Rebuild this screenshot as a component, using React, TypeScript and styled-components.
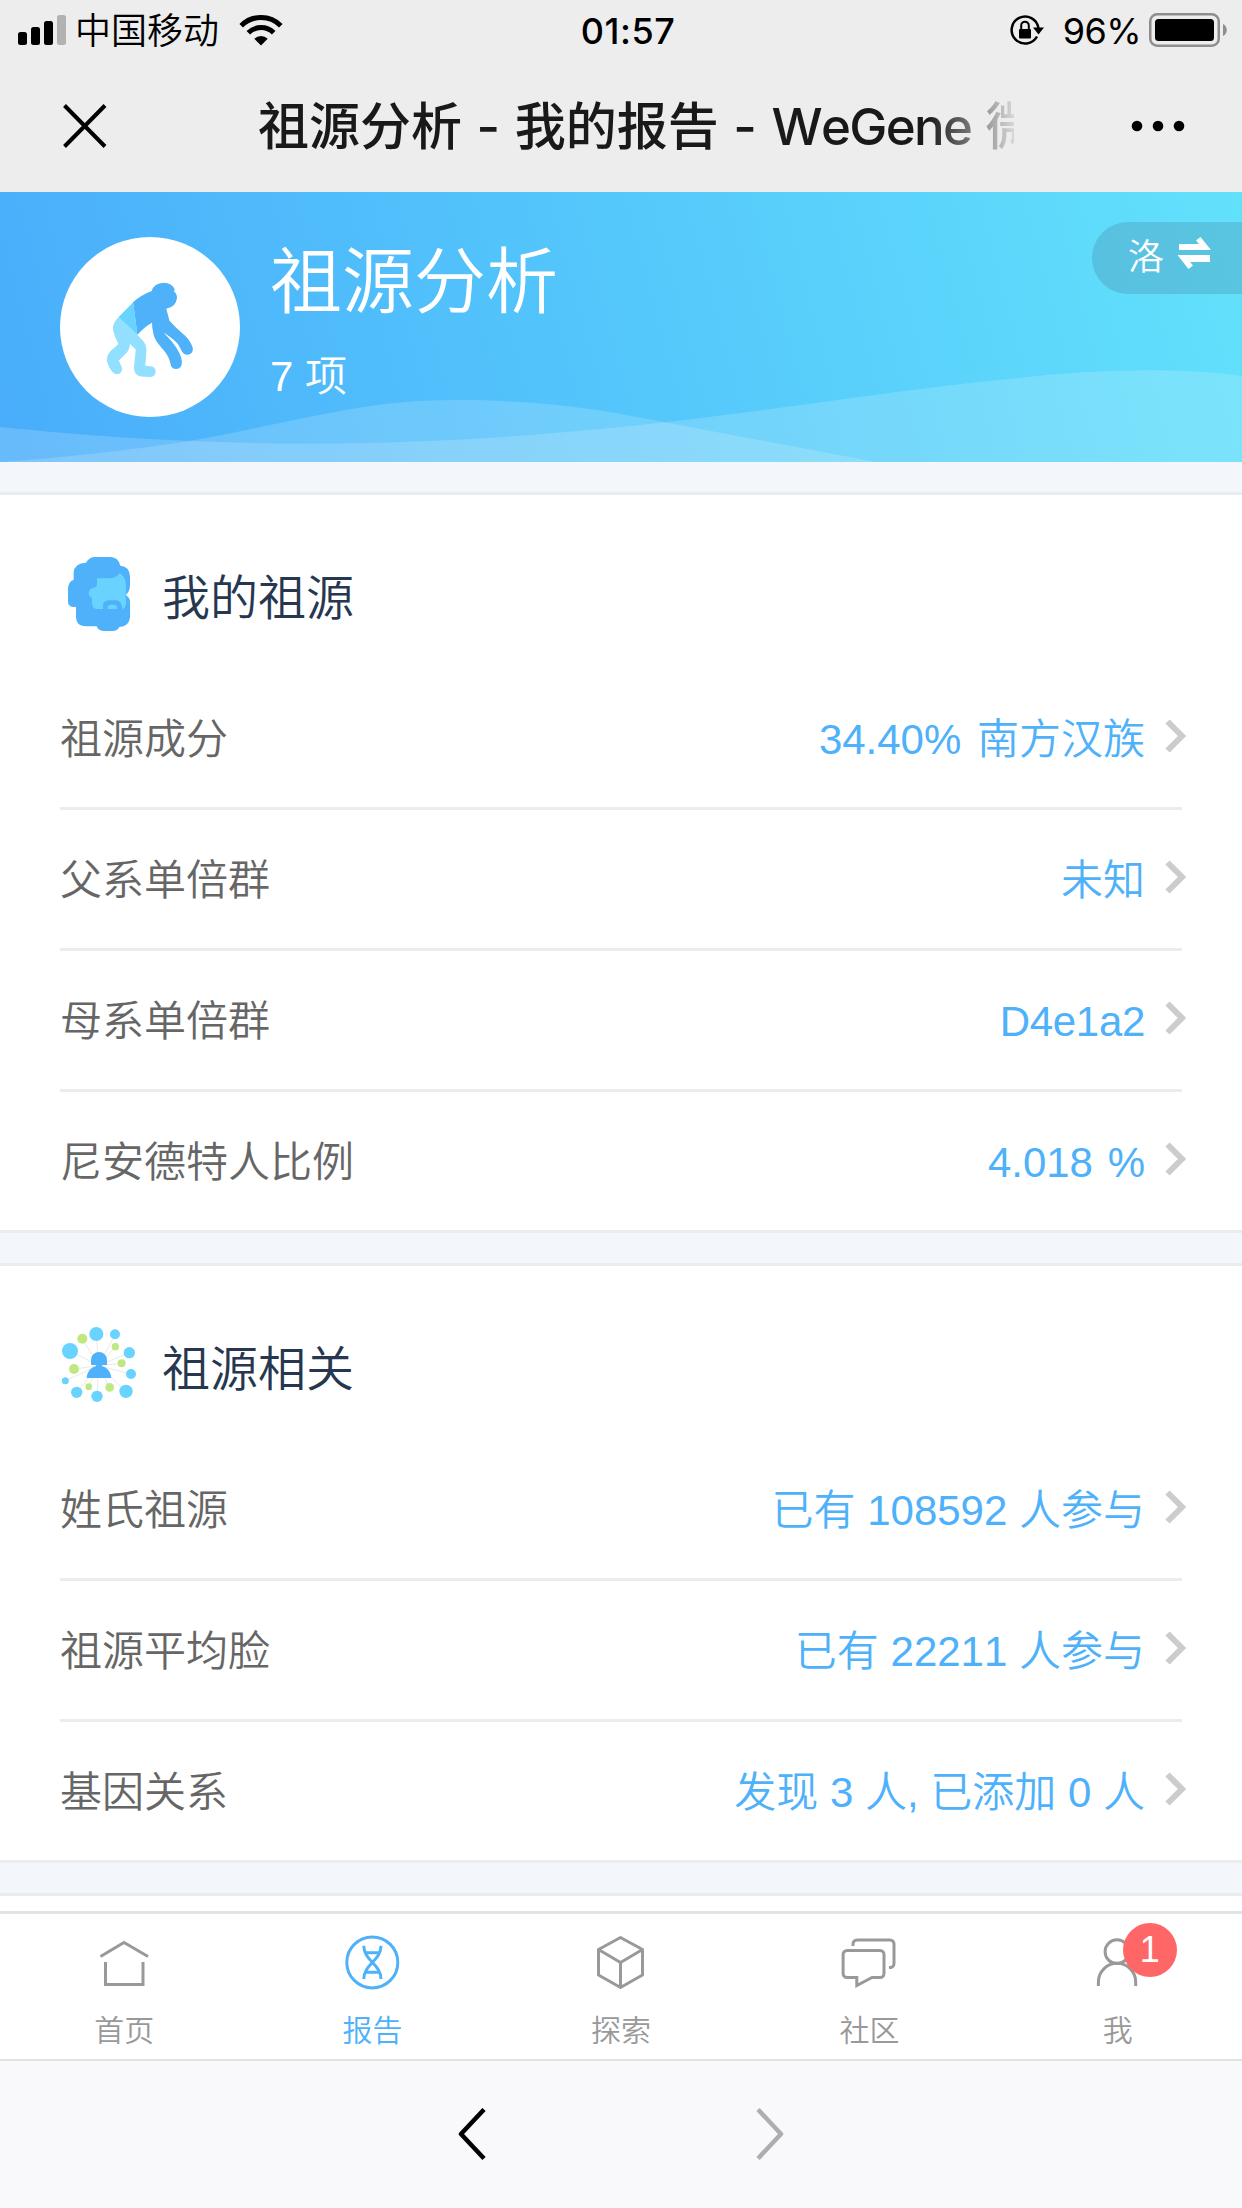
import React from "react";
import styled, { createGlobalStyle } from "styled-components";

const GlobalStyle = createGlobalStyle`
  * { box-sizing: border-box; }
  body { margin: 0; background: #f3f6fa; }
`;

const sans = `"Liberation Sans", "Noto Sans CJK SC", sans-serif`;
const system = `Inter, "Noto Sans CJK SC", sans-serif`;

const Screen = styled.div`
  width: 1242px;
  height: 2208px;
  display: flex;
  flex-direction: column;
  overflow: hidden;
  background: #f3f6fa;
  font-family: ${sans};
  font-kerning: none;
`;

const StatusBar = styled.header`
  height: 60px;
  flex: none;
  display: grid;
  grid-template-columns: 1fr auto 1fr;
  align-items: center;
  padding: 0 15px 0 18px;
  background: #ededed;
  color: #000;
  font-family: ${system};
  font-size: 36px;
  line-height: 60px;
`;

const StatusGroup = styled.div<{ $end?: boolean }>`
  display: flex;
  align-items: center;
  justify-content: ${(p) => (p.$end ? "flex-end" : "flex-start")};
  height: 60px;
`;

const Carrier = styled.span`
  margin: 0 20px 0 8px;
  font-weight: 350;
  font-size: 36px;
  height: 60px;
  line-height: 62px;
`;

const Clock = styled.time`
  margin-left: 11px;
  font-weight: 550;
  font-size: 36px;
  letter-spacing: 0.5px;
  height: 60px;
  line-height: 62px;
`;

const Percent = styled.span`
  margin: 0 8px 0 18px;
  letter-spacing: -0.6px;
  height: 60px;
  line-height: 62px;
`;

const NavBar = styled.nav`
  height: 132px;
  flex: none;
  display: flex;
  align-items: center;
  padding: 0 57px 0 63px;
  background: #ededed;
`;

const NavTitle = styled.h1`
  margin: 0 auto 0 151px;
  width: 756px;
  height: 132px;
  overflow: hidden;
  white-space: nowrap;
  font-family: ${system};
  font-size: 51px;
  font-weight: 500;
  line-height: 133px;
  word-spacing: 1px;
  color: #191919;
  mask-image: linear-gradient(90deg, #000 670px, rgba(0, 0, 0, 0.1) 756px);
`;

const Brand = styled.span`
  letter-spacing: -1.7px;
`;

const Hero = styled.section`
  position: relative;
  height: 270px;
  flex: none;
  display: flex;
  align-items: flex-start;
  padding: 45px 0 0 60px;
  background: linear-gradient(75deg, #49adfb 0%, #55c8fb 52%, #62e1fb 100%);
  color: #fff;
`;

const Waves = styled.svg`
  position: absolute;
  left: 0;
  bottom: 0;
`;

const Avatar = styled.div`
  width: 180px;
  height: 180px;
  border-radius: 50%;
  background: #fff;
`;

const HeroText = styled.div`
  display: flex;
  flex-direction: column;
  margin-left: 30px;
`;

const HeroTitle = styled.h2`
  margin: 0;
  height: 92px;
  font-size: 72px;
  font-weight: 350;
  line-height: 90px;
`;

const HeroCount = styled.span`
  height: 90px;
  line-height: 96px;
  font-size: 42px;
  font-weight: 350;
`;

const SwitchPill = styled.button`
  position: absolute;
  top: 30px;
  right: 0;
  width: 150px;
  height: 72px;
  display: flex;
  align-items: center;
  gap: 13px;
  padding: 0 0 0 36px;
  border: 0;
  border-radius: 36px 0 0 36px;
  background: rgba(60, 90, 120, 0.2);
  color: #fff;
  font: 350 36px / 70px ${sans};
`;

const PillIcon = styled.svg`
  margin-bottom: 10px;
`;

const Main = styled.main`
  flex: 1;
  min-height: 0;
  display: flex;
  flex-direction: column;
  gap: 30px;
  padding-top: 30px;
  overflow: hidden;
`;

const Panel = styled.section`
  flex: none;
  padding: 0 60px;
  background: #fff;
  border-top: 3px solid #e9edf0;
  border-bottom: 3px solid #e9edf0;
`;

const PanelHead = styled.header`
  height: 174px;
  display: flex;
  align-items: flex-start;
  padding-top: 60px;
  gap: 24px;
`;

const PanelTitle = styled.h3`
  margin: 0;
  font-size: 48px;
  font-weight: 350;
  line-height: 88px;
  height: 82px;
  color: #26374f;
`;

const Row = styled.div`
  height: 141px;
  display: flex;
  align-items: center;
  border-bottom: 3px solid #e9edf0;
  font-size: 42px;
  line-height: 141px;
  font-weight: 350;
  &:last-child {
    height: 138px;
    border-bottom: 0;
  }
`;

const RowLabel = styled.span`
  height: 138px;
  color: #666;
`;

const RowValue = styled.span<{ $tracking?: number; $gap?: number }>`
  height: 138px;
  margin-left: auto;
  color: #4eb1fa;
  font-weight: 350;
  letter-spacing: ${(p) => p.$tracking ?? 0}px;
  word-spacing: ${(p) => p.$gap ?? 0}px;
`;

const Chevron = styled.svg`
  margin: 0 -6px 5px 19px;
`;

const TabBar = styled.nav`
  height: 150px;
  flex: none;
  display: grid;
  grid-template-columns: repeat(5, 1fr);
  background: #fff;
  border-top: 3px solid #e0e4e6;
  border-bottom: 2px solid #e2e2e4;
`;

const Tab = styled.a<{ $active?: boolean }>`
  display: flex;
  flex-direction: column;
  align-items: center;
  padding-top: 18px;
  color: ${(p) => (p.$active ? "#4eb1fa" : "#999")};
  font-size: 30px;
  font-weight: 350;
`;

const TabIcon = styled.span`
  position: relative;
  width: 60px;
  height: 60px;
`;

const TabLabel = styled.span`
  margin-top: 17px;
  line-height: 44px;
`;

const Badge = styled.span`
  position: absolute;
  left: 35px;
  top: -9px;
  width: 54px;
  height: 54px;
  border-radius: 50%;
  background: #f66;
  color: #fff;
  text-align: center;
  font: 36px / 54px ${sans};
`;

const BrowserBar = styled.footer`
  height: 147px;
  flex: none;
  display: flex;
  justify-content: center;
  align-items: center;
  gap: 270px;
  background: #f9f9fb;
`;

const SignalIcon = () => (
  <svg width="49" height="30" viewBox="0 0 49 30">
    <rect x="0" y="17" width="9" height="13" rx="2.5" />
    <rect x="13" y="12" width="9" height="18" rx="2.5" />
    <rect x="26" y="6" width="9" height="24" rx="2.5" />
    <rect x="39" y="0" width="9" height="30" rx="2.5" fill="#b2b2b2" />
  </svg>
);

const WifiIcon = () => (
  <svg width="44" height="31" viewBox="0 0 44 31">
    <g fill="none" stroke="#000" strokeWidth="5">
      <path d="M2.2 10.7A28 28 0 0 1 41.8 10.7" />
      <path d="M9.3 17.8A18 18 0 0 1 34.7 17.8" />
    </g>
    <path d="M15.3 23.8A9.5 9.5 0 0 1 28.7 23.8L22 30.5Z" />
  </svg>
);

const RotationLockIcon = () => (
  <svg width="36" height="32" viewBox="0 0 36 32">
    <path d="M28 22.5A13.5 13.5 0 1 1 29.5 14" fill="none" stroke="#000" strokeWidth="2.5" />
    <path d="M24 13.5H35L29.5 20.5Z" />
    <rect x="10" y="15" width="12" height="9.5" rx="1" />
    <path d="M12.2 16V11.5a3.8 3.8 0 0 1 7.6 0V16" fill="none" stroke="#000" strokeWidth="2" />
  </svg>
);

const BatteryIcon = () => (
  <svg width="78" height="34" viewBox="0 0 78 34">
    <rect x="1.25" y="1.25" width="68.5" height="31.5" rx="7" fill="none" stroke="#8e8e8e" strokeWidth="2.5" />
    <rect x="6" y="6" width="59" height="22" rx="3.5" />
    <path d="M74 11c5 2 5 10 0 12Z" fill="#8e8e8e" />
  </svg>
);

const CloseIcon = () => (
  <svg width="44" height="44" viewBox="0 0 44 44">
    <path d="M1.5 1.5L42 42.5M42 1.5L1.5 42.5" stroke="#000" strokeWidth="4" />
  </svg>
);

const MoreIcon = () => (
  <svg width="54" height="12" viewBox="0 0 54 12">
    <circle cx="6" cy="6" r="5.3" />
    <circle cx="27" cy="6" r="5.3" />
    <circle cx="48" cy="6" r="5.3" />
  </svg>
);

const ApeIcon = () => (
  <svg width="180" height="180" viewBox="60 237 180 180">
    <path
      fill="#4eb1fa"
      d="M133 302.3Q141 295 151.7 291Q154 283 163.6 282.7Q172 283 174.7 289.5L174 291.5Q177 293.5 177 298Q176 307 166.3 308.7L169.5 320.7Q175 327 182 333Q190 339 192.9 348.3Q193 354 188 354.7Q183.5 355 181.4 350.5C177 340 171 338 164 332.7C168 338 180 348 181.9 361Q182 369 176.2 369Q171 369 170.3 363C168 350 155 345 153.3 333Q152 328 152 322.7Q144 327 137.4 335Z"
    />
    <path fill="#68d3fe" d="M133.2 302.2L118.4 317.3L137.6 335.2Z" />
    <path
      fill="#92dfff"
      d="M118.4 317.3Q112 324 113 330Q114.5 337 118.3 343.8Q117 346 111 350.5Q106 356 107 361.5Q109 368 112 371.7Q115.5 375.5 119.5 373.5Q123.5 370.5 121.5 366.5L118.8 360.5L127.2 352.2Q130 348 130 344L135.8 349.5L133.9 367.5Q134 375 141 376.5L149.7 377Q155 377 155.7 371.8Q155.5 366.5 150.5 366.3L145.3 365.7L146.5 349.5Q146.5 345 143.8 341.7L137.4 335Z"
    />
  </svg>
);

const AncestorIcon = () => (
  <svg width="78" height="78" viewBox="60 75 234 234">
    <path
      fill="#4eb1fa"
      d="M138 98Q147 81 166 81H212Q235 82 241 107Q270 110 270 140V165Q270 185 257 195Q270 203 270 215V262Q268 290 238 291Q232 303 218 303H190Q174 302 170 289H135Q109 288 108 262V231H99Q85 230 84 216V178Q84 155 101 149V128Q103 99 138 98Z"
    />
    <path
      fill="#68d3fe"
      d="M171 145H203Q232 145 239 129Q258 142 258 165V188Q254 196 258 208V222Q256 236 246 237V228Q242 211 226 211H207Q191 212 189 224V237H169Q156 236 156 220V204Q146 200 146 189Q147 174 163 173Q172 170 171 158Z"
    />
    <path fill="#68d3fe" d="M203 237V232Q204 224 212 224H223Q231 225 232 233V237Z" />
  </svg>
);

const spokes: [number, number, number, string][] = [
  [90, 153, 24, "#68d3fe"],
  [127, 116, 15, "#bfe882"],
  [169, 102, 21, "#68d3fe"],
  [225, 103, 15, "#68d3fe"],
  [226, 140, 11, "#bfe882"],
  [268, 158, 17, "#68d3fe"],
  [245, 190, 12, "#bfe882"],
  [273, 222, 15, "#68d3fe"],
  [258, 274, 20, "#68d3fe"],
  [209, 262, 13, "#bfe882"],
  [171, 289, 17, "#68d3fe"],
  [146, 260, 10, "#bfe882"],
  [110, 277, 17, "#68d3fe"],
  [76, 242, 10.5, "#68d3fe"],
  [102, 207, 15, "#bfe882"],
];

const NetworkIcon = () => (
  <svg width="78" height="78" viewBox="60 78 234 234">
    {spokes.map(([x, y]) => (
      <line key={`${x}-${y}`} x1={x} y1={y} x2="176" y2="197" stroke="#e4e4e8" strokeWidth="2.5" />
    ))}
    {spokes.map(([x, y, r, fill]) => (
      <circle key={`${x}-${y}`} cx={x} cy={y} r={r} fill={fill} />
    ))}
    <path fill="#4eb1fa" d="M153 195V180a24 24 0 0 1 48 0V195H187L185 198C202 202 213 216 214 234H140C141 216 152 202 169 198L167 195Z" />
  </svg>
);

const HomeGlyph = () => <path d="M6.5 24.5L30 10.5L54 24.5M11.5 30V52.5H49V30" />;

const DnaGlyph = () => (
  <>
    <circle cx="29.3" cy="30.4" r="25.5" />
    <path d="M20.800 13.700C20.800 29 38 32 38 47M38 13.700C38 29 20.800 32 20.800 47" />
    <path d="M22.500 20.800H36.500M22.500 40.200H36.500" />
  </>
);

const CubeGlyph = () => (
  <path
    strokeLinejoin="round"
    d="M29.500 5.500L51.500 17.500V43L29.500 55.500L7.500 43V17.500ZM7.500 17.500L29.500 30.500L51.500 17.500M29.500 30.500V55.500"
  />
);

const ChatGlyph = () => (
  <>
    <path d="M8.1 18.5H41a4 4 0 0 1 4 4V41.5a4 4 0 0 1-4 4H33L17.8 53.5V45.5H8.1a4 4 0 0 1-4-4V22.5a4 4 0 0 1 4-4Z" />
    <path d="M14 14V12a4 4 0 0 1 4-4H51a4 4 0 0 1 4 4V31.5a4 4 0 0 1-4 4H50" />
  </>
);

const PersonGlyph = () => (
  <>
    <circle cx="29" cy="19.7" r="11.9" />
    <path d="M10.4 54V50A18.6 18.6 0 0 1 47.7 50V54" />
  </>
);

type RowData = { label: string; value: string; tracking?: number; gap?: number };

const sections: { title: string; icon: React.ReactNode; rows: RowData[] }[] = [
  {
    title: "我的祖源",
    icon: <AncestorIcon />,
    rows: [
      { label: "祖源成分", value: "34.40% 南方汉族", gap: 4 },
      { label: "父系单倍群", value: "未知" },
      { label: "母系单倍群", value: "D4e1a2", tracking: -0.3 },
      { label: "尼安德特人比例", value: "4.018 %", gap: 3 },
    ],
  },
  {
    title: "祖源相关",
    icon: <NetworkIcon />,
    rows: [
      { label: "姓氏祖源", value: "已有 108592 人参与" },
      { label: "祖源平均脸", value: "已有 22211 人参与" },
      { label: "基因关系", value: "发现 3 人, 已添加 0 人" },
    ],
  },
];

const tabs = [
  { label: "首页", glyph: <HomeGlyph /> },
  { label: "报告", glyph: <DnaGlyph />, active: true },
  { label: "探索", glyph: <CubeGlyph /> },
  { label: "社区", glyph: <ChatGlyph /> },
  { label: "我", glyph: <PersonGlyph />, badge: 1 },
];

export default function App() {
  return (
    <Screen>
      <GlobalStyle />
      <StatusBar>
        <StatusGroup>
          <SignalIcon />
          <Carrier>中国移动</Carrier>
          <WifiIcon />
        </StatusGroup>
        <Clock>01:57</Clock>
        <StatusGroup $end>
          <RotationLockIcon />
          <Percent>96%</Percent>
          <BatteryIcon />
        </StatusGroup>
      </StatusBar>
      <NavBar>
        <CloseIcon />
        <NavTitle>
          祖源分析 - 我的报告 - <Brand>WeGene</Brand> 微
        </NavTitle>
        <MoreIcon />
      </NavBar>
      <Hero>
        <Waves width="1242" height="270" viewBox="0 192 1242 270" fill="#fff" fillOpacity="0.17">
          <path d="M0 427C90 436 190 443.5 310 443.5C430 443.5 530 436 621 427C760 413 900 389 1010 379C1090 369 1180 367 1242 376V462H0Z" />
          <path d="M0 462C70 457 130 450 190 441C250 430 300 418 341 411C380 403 420 400 458 400C515 400 570 405 621 414L876 462Z" />
        </Waves>
        <Avatar>
          <ApeIcon />
        </Avatar>
        <HeroText>
          <HeroTitle>祖源分析</HeroTitle>
          <HeroCount>7 项</HeroCount>
        </HeroText>
        <SwitchPill>
          洛
          <PillIcon width="35" height="32" viewBox="0 0 35 32" fill="#fff">
            <path d="M2 7H22L19 3.5L23.5 0L34 13H2Z" />
            <path d="M33 25H13L16 28.5L11.5 32L0.5 18H33Z" />
          </PillIcon>
        </SwitchPill>
      </Hero>
      <Main>
        {sections.map((s) => (
          <Panel key={s.title}>
            <PanelHead>
              {s.icon}
              <PanelTitle>{s.title}</PanelTitle>
            </PanelHead>
            {s.rows.map((r) => (
              <Row key={r.label}>
                <RowLabel>{r.label}</RowLabel>
                <RowValue $tracking={r.tracking} $gap={r.gap}>
                  {r.value}
                </RowValue>
                <Chevron width="24" height="34" viewBox="0 0 24 34">
                  <path d="M3.5 2.5L18 17L3.5 31.5" fill="none" stroke="#ccc" strokeWidth="6" />
                </Chevron>
              </Row>
            ))}
          </Panel>
        ))}
        <Panel>
          <PanelHead />
        </Panel>
      </Main>
      <TabBar>
        {tabs.map((t) => (
          <Tab key={t.label} $active={t.active}>
            <TabIcon>
              <svg width="60" height="60" viewBox="0 0 60 60" fill="none" stroke="currentColor" strokeWidth="3">
                {t.glyph}
              </svg>
              {t.badge && <Badge>{t.badge}</Badge>}
            </TabIcon>
            <TabLabel>{t.label}</TabLabel>
          </Tab>
        ))}
      </TabBar>
      <BrowserBar>
        <svg width="28" height="54" viewBox="0 0 28 54">
          <path d="M26 1.500L3 26L26 50.500" fill="none" stroke="#000" strokeWidth="4.500" strokeLinejoin="round" />
        </svg>
        <svg width="28" height="54" viewBox="0 0 28 54">
          <path d="M2 1.500L25 26L2 50.500" fill="none" stroke="#aeaeb0" strokeWidth="4.500" strokeLinejoin="round" />
        </svg>
      </BrowserBar>
    </Screen>
  );
}
